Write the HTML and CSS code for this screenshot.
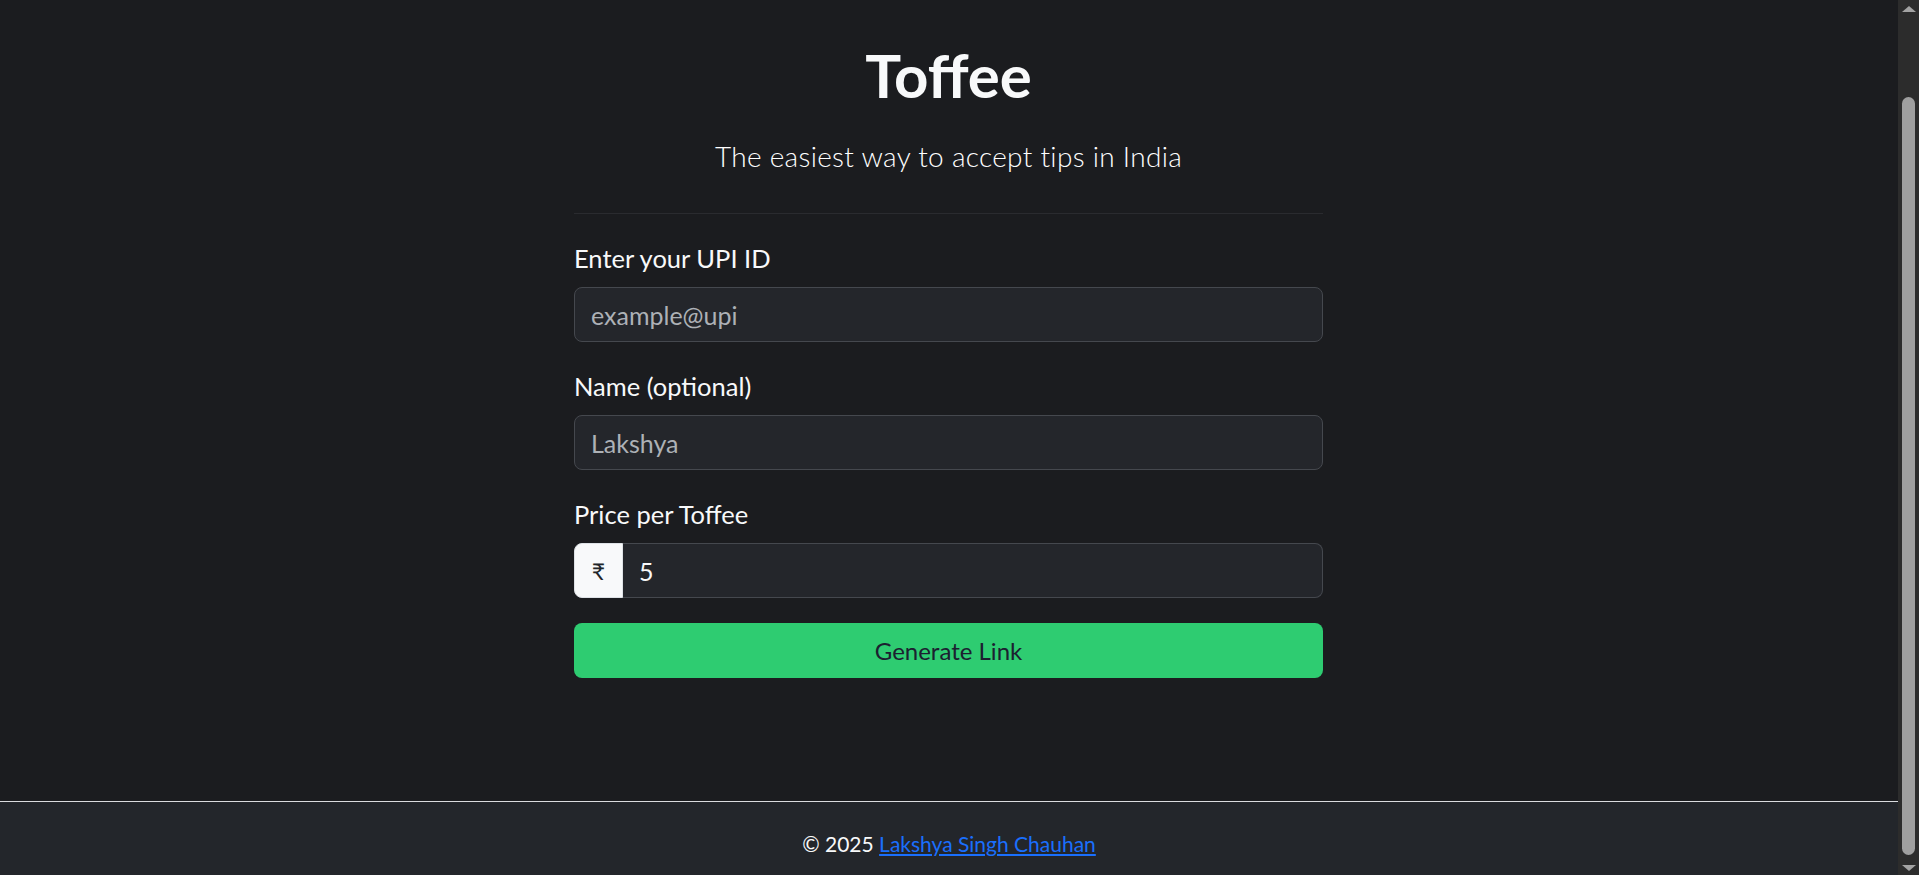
FILE: index.html
```html
<!DOCTYPE html>
<html lang="en">
<head>
<meta charset="utf-8">
<title>Toffee</title>
<link rel="stylesheet" href="styles.css">
</head>
<body>
<main class="main">
  <header class="hero">
    <h1 class="title">Toffee</h1>
    <p class="lead">The easiest way to accept tips in India</p>
  </header>
  <hr class="divider">
  <form class="form">
    <div class="group">
      <label class="label" for="upi">Enter your UPI ID</label>
      <input class="control" id="upi" type="text" placeholder="example@upi">
    </div>
    <div class="group">
      <label class="label" for="name">Name (optional)</label>
      <input class="control" id="name" type="text" placeholder="Lakshya">
    </div>
    <div class="group">
      <label class="label" for="price">Price per Toffee</label>
      <div class="input-group">
        <span class="addon">₹</span>
        <input class="control control-joined" id="price" type="number" value="5">
      </div>
    </div>
    <button class="btn" type="button">Generate Link</button>
  </form>
</main>
<footer class="footer">
  <p class="footer-text">© 2025 <a class="footer-link" href="#">Lakshya Singh Chauhan</a></p>
</footer>
<div class="scrollbar" aria-hidden="true">
  <span class="sb-arrow sb-up"></span>
  <span class="sb-track"><span class="sb-thumb"></span></span>
  <span class="sb-arrow sb-down"></span>
</div>
</body>
</html>
```

FILE: styles.css
```css
html {
  color-scheme: dark;
}
body {
  margin: 0 21px 0 0;
  background: #1b1c1f;
  color: #f8f9fa;
  font-family: "Segoe UI", Lato, "DejaVu Sans", sans-serif;
}
.main {
  width: 749px;
  margin-left: calc(50% - 375px);
  padding-top: 39px;
  padding-bottom: 123px;
}
.hero {
  text-align: center;
}
.title {
  margin: 0;
  font-size: 60px;
  line-height: 72px;
  font-weight: 700;
  color: #f8f9fa;
}
.lead {
  margin: 26px 0 0;
  font-size: 28px;
  line-height: 38px;
  letter-spacing: 0.3px;
  font-weight: 300;
  color: #ffffff;
}
.divider {
  margin: 38px 0 0;
  border: 0;
  border-top: 1px solid #2a2b2f;
  height: 0;
}
.form {
  display: flex;
  flex-direction: column;
  gap: 25px;
  padding-top: 25px;
}
.group {
  display: flex;
  flex-direction: column;
}
.label {
  font-size: 25.5px;
  line-height: 38px;
  margin-bottom: 10px;
  color: #f8f9fa;
}
.control {
  box-sizing: border-box;
  height: 55px;
  width: 100%;
  padding: 0 16px;
  background: #24262b;
  border: 1px solid #45484e;
  border-radius: 8px;
  color: #f8f9fa;
  font-family: inherit;
  font-size: 25px;
  outline: none;
}
.control::placeholder {
  color: #adb1b6;
}
.control::-webkit-outer-spin-button,
.control::-webkit-inner-spin-button {
  -webkit-appearance: none;
  margin: 0;
}
.input-group {
  display: flex;
}
.addon {
  box-sizing: border-box;
  width: 49px;
  height: 55px;
  display: flex;
  align-items: center;
  justify-content: center;
  background: #f8f9fa;
  color: #212529;
  border: 1px solid #dee2e6;
  border-radius: 8px 0 0 8px;
  font-size: 23px;
}
.control-joined {
  flex: 1;
  border-left: 0;
  border-radius: 0 8px 8px 0;
}
.btn {
  height: 55px;
  width: 100%;
  border: 0;
  border-radius: 8px;
  background: #2ecc71;
  color: #1c2030;
  font-family: inherit;
  font-size: 24px;
  cursor: pointer;
}
.footer {
  background: #23262b;
  border-top: 1px solid #dadcdf;
  padding: 27px 0 27px;
  text-align: center;
}
.footer-text {
  margin: 0;
  font-size: 21px;
  line-height: 30px;
  color: #f8f9fa;
}
.footer-link {
  color: #1a6ffd;
  text-decoration: underline;
}
.scrollbar {
  position: fixed;
  top: 0;
  right: 0;
  width: 21px;
  height: 100vh;
  background: #2c2c2c;
  display: flex;
  flex-direction: column;
  align-items: center;
}
.sb-arrow {
  width: 0;
  height: 0;
  border-left: 7px solid transparent;
  border-right: 7px solid transparent;
  flex: none;
}
.sb-up {
  margin-top: 6px;
  border-bottom: 6px solid #a3a3a3;
}
.sb-down {
  margin-bottom: 4px;
  border-top: 6px solid #a3a3a3;
}
.sb-track {
  flex: 1;
  display: flex;
  flex-direction: column;
  justify-content: flex-end;
  padding: 0 0 10px;
  width: 100%;
  align-items: center;
}
.sb-thumb {
  width: 13px;
  height: 758px;
  border-radius: 7px;
  background: #9f9f9f;
}
```
